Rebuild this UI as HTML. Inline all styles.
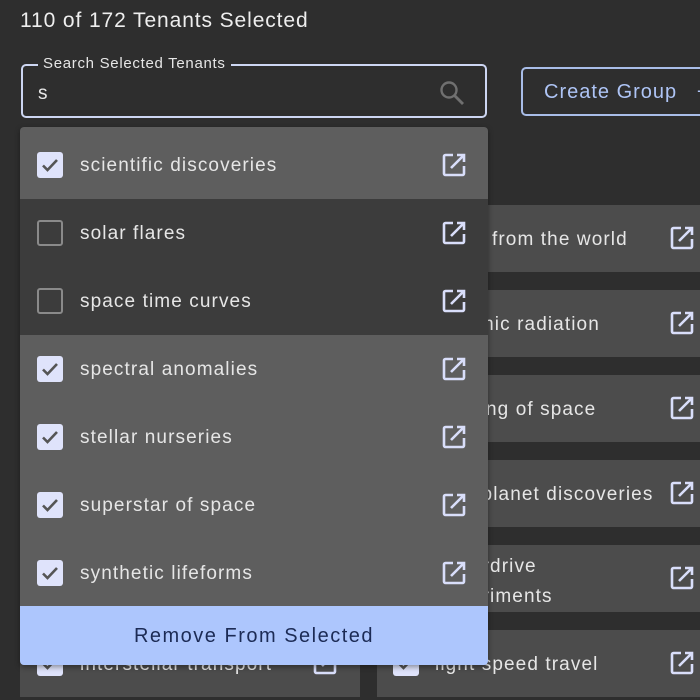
<!DOCTYPE html>
<html><head><style>
*{box-sizing:border-box;margin:0;padding:0}
body{width:700px;height:700px;overflow:hidden;background:#2e2e2e;font-family:"Liberation Sans",sans-serif;color:#e8e8e8;position:relative}
.abs{position:absolute;white-space:nowrap}
.card{position:absolute;background:#4c4c4c;height:67px}
.ct{position:absolute;font-size:19px;color:#e6e6e6;white-space:nowrap;letter-spacing:1.1px}
.ic{position:absolute;width:26px;height:26px}
.cb{position:absolute;left:17px;width:26px;height:26px;border-radius:3px}
.on{background:#dfe3fb}
.off{border:2px solid #8a8a8a}
.row{position:absolute;left:0;width:468px;height:68px}
.row .ct{left:60px;top:24px}
.row .cb{top:21px}
.row .ic{left:421px;top:21px}
</style></head><body>
<svg width="0" height="0" style="position:absolute"><defs><symbol id="o" viewBox="0 0 26 26"><path d="M12 3H4.5A1.5 1.5 0 0 0 3 4.5v17A1.5 1.5 0 0 0 4.5 23h17a1.5 1.5 0 0 0 1.5-1.5V14" fill="none" stroke="#d9defa" stroke-width="2.6"/><path d="M16 3h7v7M23 3L10 16" fill="none" stroke="#d9defa" stroke-width="2.6"/></symbol>
<symbol id="c" viewBox="0 0 26 26"><path d="M6 13.5l4.5 4.5L20 8" fill="none" stroke="#555" stroke-width="2.6"/></symbol></defs></svg>

<div class="abs" style="left:20px;top:9px;font-size:21px;color:#eee;letter-spacing:0.9px">110 of 172 Tenants Selected</div>

<div class="abs" style="left:21px;top:64px;width:466px;height:54px;border:2px solid #cdd6f2;border-radius:5px"></div>
<div class="abs" style="left:38px;top:55px;padding:0 5px;background:#2e2e2e;font-size:15px;color:#e6e6e6;letter-spacing:0.7px">Search Selected Tenants</div>
<div class="abs" style="left:38px;top:83px;font-size:19px">s</div>
<svg class="abs" style="left:438px;top:79px" width="28" height="28" viewBox="0 0 28 28"><circle cx="11" cy="11" r="7.5" fill="none" stroke="#707070" stroke-width="2.4"/><path d="M16.5 16.5L25 25" stroke="#707070" stroke-width="2.8"/></svg>

<div class="abs" style="left:521px;top:67px;width:200px;height:49px;border:2px solid #a9bde8;border-radius:5px"></div>
<div class="abs" style="left:544px;top:81px;font-size:20px;color:#aec4f5;letter-spacing:1px">Create Group &nbsp;&nbsp;+</div>

<div class="card" style="left:377px;top:205px;width:330px"><div class="ct" style="left:115px;top:24px">from the world</div><svg class="ic" style="left:292px;top:20px"><use href="#o"/></svg></div>
<div class="card" style="left:377px;top:290px;width:330px"><div class="ct" style="left:68px;top:24px">cosmic radiation</div><svg class="ic" style="left:292px;top:20px"><use href="#o"/></svg></div>
<div class="card" style="left:377px;top:375px;width:330px"><div class="ct" style="left:40px;top:24px">beginning of space</div><svg class="ic" style="left:292px;top:20px"><use href="#o"/></svg></div>
<div class="card" style="left:377px;top:460px;width:330px"><div class="ct" style="left:60px;top:24px">new planet discoveries</div><svg class="ic" style="left:292px;top:20px"><use href="#o"/></svg></div>
<div class="card" style="left:377px;top:545px;width:330px"><div class="ct" style="left:60px;top:7px;line-height:30px">hyperdrive<br>experiments</div><svg class="ic" style="left:292px;top:20px"><use href="#o"/></svg></div>
<div class="card" style="left:377px;top:630px;width:330px"><div class="cb on" style="left:16px;top:20px"><svg width="26" height="26"><use href="#c"/></svg></div><div class="ct" style="left:58px;top:24px">light speed travel</div><svg class="ic" style="left:292px;top:20px"><use href="#o"/></svg></div>
<div class="card" style="left:20px;top:630px;width:340px"><div class="cb on" style="left:17px;top:20px"><svg width="26" height="26"><use href="#c"/></svg></div><div class="ct" style="left:60px;top:24px">interstellar transport</div><svg class="ic" style="left:292px;top:20px"><use href="#o"/></svg></div>

<div class="abs" style="left:20px;top:127px;width:468px;height:538px;background:#5e5e5e;border-radius:4px;overflow:hidden;box-shadow:0 2px 6px rgba(0,0,0,.4)">
 <div class="row" style="top:4px;background:#5e5e5e"><div class="cb on"><svg width="26" height="26"><use href="#c"/></svg></div><div class="ct">scientific discoveries</div><svg class="ic"><use href="#o"/></svg></div>
 <div class="row" style="top:72px;background:#3c3c3c"><div class="cb off"></div><div class="ct">solar flares</div><svg class="ic"><use href="#o"/></svg></div>
 <div class="row" style="top:140px;background:#3c3c3c"><div class="cb off"></div><div class="ct">space time curves</div><svg class="ic"><use href="#o"/></svg></div>
 <div class="row" style="top:208px"><div class="cb on"><svg width="26" height="26"><use href="#c"/></svg></div><div class="ct">spectral anomalies</div><svg class="ic"><use href="#o"/></svg></div>
 <div class="row" style="top:276px"><div class="cb on"><svg width="26" height="26"><use href="#c"/></svg></div><div class="ct">stellar nurseries</div><svg class="ic"><use href="#o"/></svg></div>
 <div class="row" style="top:344px"><div class="cb on"><svg width="26" height="26"><use href="#c"/></svg></div><div class="ct">superstar of space</div><svg class="ic"><use href="#o"/></svg></div>
 <div class="row" style="top:412px"><div class="cb on"><svg width="26" height="26"><use href="#c"/></svg></div><div class="ct">synthetic lifeforms</div><svg class="ic"><use href="#o"/></svg></div>
 <div class="abs" style="left:0;top:479px;width:468px;height:59px;background:#adc6fd;color:#1c2b55;font-size:20px;text-align:center;line-height:60px;letter-spacing:1.5px">Remove From Selected</div>
</div>
</body></html>
